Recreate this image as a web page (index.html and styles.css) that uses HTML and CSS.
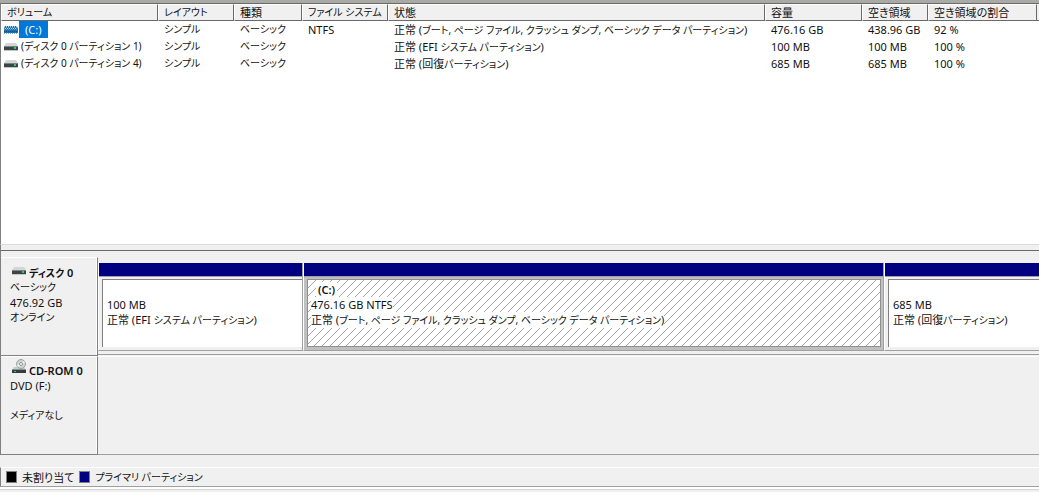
FILE: index.html
```html
<!DOCTYPE html>
<html lang="ja">

<head>
    <meta charset="utf-8">
    <title>ディスクの管理</title>
    <link rel="stylesheet" href="styles.css">
</head>

<body>
    <svg class="defs" width="0" height="0" aria-hidden="true">
        <symbol id="drive" viewBox="0 0 14 8">
            <path d="M2 0h10l2 3H0z" fill="#d4d6d6" />
            <path d="M0 3h14v4H0z" fill="#3c4446" />
            <path d="M0 3h14v1H0z" fill="#7d8486" />
            <path d="M0 7h14v1H0z" fill="#c4c6c6" />
            <path d="M10 4h2v2h-2z" fill="#35c46a" />
        </symbol>
        <symbol id="drive-selected" viewBox="0 0 14 8">
            <path d="M1 0h12l1 3v4H0V3z" fill="#1d6fae" />
            <path d="M2 .5h11M1 2.500h12" stroke="#b9d8ee" stroke-dasharray="1 1" />
            <path d="M0 1.500h14M0 3.500h14" stroke="#5f9fce" stroke-dasharray="1 1" />
            <path d="M0 5.500h14" stroke="#0b4f86" stroke-dasharray="1 1" />
            <path d="M0 7.500h14" stroke="#7fb2d8" stroke-dasharray="1 1" />
        </symbol>
        <symbol id="cdrom" viewBox="0 0 14 15">
            <path d="M2 8h10l2 3H0z" fill="#c6caca" />
            <circle cx="9" cy="5" r="4.500" fill="#d0d5d6" stroke="#9aa3a5" />
            <path d="M9 5l3-3 1 2zM9 5L6 8 5 6z" fill="#f6f8f8" />
            <circle cx="9" cy="5" r="1.500" fill="#fff" stroke="#8c9698" />
            <path d="M0 10h14v1H0z" fill="#8f9698" />
            <path d="M0 11h14v3H0z" fill="#343c3e" />
            <path d="M2 12h2v1H2z" fill="#35c46a" />
        </symbol>
    </svg>

    <div class="volumes">
        <table>
            <colgroup>
                <col class="c-volume">
                <col class="c-layout">
                <col class="c-type">
                <col class="c-fs">
                <col class="c-status">
                <col class="c-size">
                <col class="c-free">
                <col class="c-rate">
                <col class="c-rest">
            </colgroup>
            <thead>
                <tr>
                    <th class="kana">ボリューム</th>
                    <th class="kana">レイアウト</th>
                    <th>種類</th>
                    <th class="kana">ファイル システム</th>
                    <th>状態</th>
                    <th>容量</th>
                    <th>空き領域</th>
                    <th>空き領域の割合</th>
                    <td></td>
                </tr>
            </thead>
            <tbody>
                <tr>
                    <td class="name"><svg class="icon"><use href="#drive-selected" /></svg><span class="on">(C:)</span></td>
                    <td class="kana">シンプル</td>
                    <td class="kana">ベーシック</td>
                    <td>NTFS</td>
                    <td>正常 (<span class="kana">ブート, ページ ファイル, クラッシュ ダンプ, ベーシック データ パーティション</span>)</td>
                    <td>476.16 GB</td>
                    <td>438.96 GB</td>
                    <td>92 %</td>
                    <td></td>
                </tr>
                <tr>
                    <td class="name kana"><svg class="icon"><use href="#drive" /></svg><span>(ディスク 0 パーティション 1)</span></td>
                    <td class="kana">シンプル</td>
                    <td class="kana">ベーシック</td>
                    <td></td>
                    <td>正常 (EFI <span class="kana">システム パーティション</span>)</td>
                    <td>100 MB</td>
                    <td>100 MB</td>
                    <td>100 %</td>
                    <td></td>
                </tr>
                <tr>
                    <td class="name kana"><svg class="icon"><use href="#drive" /></svg><span>(ディスク 0 パーティション 4)</span></td>
                    <td class="kana">シンプル</td>
                    <td class="kana">ベーシック</td>
                    <td></td>
                    <td>正常 (回復<span class="kana">パーティション</span>)</td>
                    <td>685 MB</td>
                    <td>685 MB</td>
                    <td>100 %</td>
                    <td></td>
                </tr>
            </tbody>
        </table>
    </div>

    <div class="splitter"></div>

    <div class="disks">
        <div class="disk">
            <div class="label">
                <h2><svg class="icon"><use href="#drive" /></svg><span><span class="kana">ディスク</span> 0</span></h2>
                <p class="kana">ベーシック</p>
                <p>476.92 GB</p>
                <p class="kana">オンライン</p>
            </div>
            <div class="parts">
                <div class="part">
                    <div class="bar"></div>
                    <div class="box">
                        <p></p>
                        <p>100 MB</p>
                        <p>正常 (EFI <span class="kana">システム パーティション</span>)</p>
                    </div>
                </div>
                <div class="part selected">
                    <div class="bar"></div>
                    <div class="box">
                        <p><b>(C:)</b></p>
                        <p><span class="plain">476.16 GB NTFS</span></p>
                        <p><span class="plain">正常 (<span class="kana">ブート, ページ ファイル, クラッシュ ダンプ, ベーシック データ パーティション</span>)</span></p>
                    </div>
                </div>
                <div class="part last">
                    <div class="bar"></div>
                    <div class="box">
                        <p></p>
                        <p>685 MB</p>
                        <p>正常 (回復<span class="kana">パーティション</span>)</p>
                    </div>
                </div>
            </div>
        </div>
        <div class="disk">
            <div class="label cd">
                <h2><svg class="icon"><use href="#cdrom" /></svg><span>CD-ROM 0</span></h2>
                <p>DVD (F:)</p>
                <p></p>
                <p class="kana">メディアなし</p>
            </div>
            <div class="empty"></div>
        </div>
    </div>

    <ul class="legend">
        <li><i class="black"></i>未割り当て</li>
        <li class="kana"><i class="navy"></i>プライマリ パーティション</li>
    </ul>
    <div class="status"></div>
</body>

</html>
```
FILE: styles.css
```css
* {
    margin: 0;
    padding: 0;
    box-sizing: border-box;
}

body {
    display: flex;
    flex-direction: column;
    min-height: 100vh;
    background: #f0f0f0;
    color: #111;
    font: 11px/15px "Noto Sans", "Noto Sans CJK JP", sans-serif;
    font-feature-settings: "palt";
    border-top: 3px solid #a9a9a5;
}

.kana {
    font-size: 10px;
}

.defs {
    position: absolute;
}

.icon {
    width: 14px;
    height: 8px;
    flex: none;
}

/* volume list */
.volumes {
    flex: 1;
    background: #fff;
    border-top: 1px solid #696969;
    border-left: 1px solid #808080;
}

table {
    width: 100%;
    table-layout: fixed;
    border-collapse: separate;
    border-spacing: 0;
}

.c-volume {
    width: 157px;
}

.c-layout {
    width: 76px;
}

.c-type {
    width: 68px;
}

.c-fs {
    width: 86px;
}

.c-size {
    width: 97px;
}

.c-free {
    width: 66px;
}

.c-rate {
    width: 109px;
}

.c-rest {
    width: 2px;
}

th,
td {
    height: 17px;
    padding-left: 6px;
    text-align: left;
    font-weight: normal;
    white-space: nowrap;
}

thead th,
thead td {
    background: #f0f0f0;
    border-top: 1px solid #fff;
    border-bottom: 1px solid #696969;
}

thead th {
    border-left: 1px solid #fff;
    border-right: 1px solid #696969;
    padding-left: 5px;
}

thead td,
tbody td:last-child {
    padding: 0;
}

.name {
    display: flex;
    align-items: center;
    padding-left: 3px;
}

.name span {
    padding: 0 3px;
    line-height: 17px;
}

.name .on {
    margin-left: 1px;
    padding: 0 6px;
    background: #0078d7;
    color: #fff;
}

.splitter {
    height: 7px;
    background: #f0f0f0;
    border-top: 1px solid #dcdcdc;
    border-bottom: 1px solid #696969;
    border-left: 1px solid #808080;
}

/* disks */
.disks {
    padding-top: 6px;
    border-left: 1px solid #808080;
}

.disk {
    display: flex;
    height: 99px;
}

.label {
    width: 97px;
    flex: none;
    padding: 7px 0 0 9px;
    border-top: 1px solid #fff;
    border-right: 1px solid #808080;
    border-bottom: 1px solid #808080;
    box-shadow: inset -1px 0 #fff;
}

.label h2 {
    display: flex;
    gap: 3px;
    height: 15px;
    padding-left: 2px;
    font-size: 11px;
    font-weight: 600;
}

.label h2 .icon {
    margin-top: 2px;
}

.label p {
    height: 15px;
}

.label.cd {
    padding-top: 6px;
}

.cd h2 {
    align-items: flex-end;
}

.cd h2 .icon {
    height: 15px;
    margin: 0 0 4px;
}

.parts {
    flex: 1;
    min-width: 0;
    display: grid;
    grid-template-columns: 205fr 581fr 155fr;
    padding-top: 6px;
    border-bottom: 1px solid #a0a0a0;
    margin-bottom: 1px;
}

.part {
    display: flex;
    flex-direction: column;
    min-width: 0;
    margin-bottom: 3px;
    border-left: 1px solid #fff;
    border-right: 1px solid #a0a0a0;
    border-bottom: 1px solid #a0a0a0;
}

.bar {
    height: 14px;
    background: #000080;
    border-bottom: 1px solid #a0a0a0;
}

.box {
    flex: 1;
    margin: 2px 0 3px 3px;
    padding: 2px 0 0 4px;
    background: #fff;
    border-top: 1px solid #808080;
    border-left: 1px solid #808080;
    white-space: nowrap;
    overflow: hidden;
}

.box p {
    height: 15px;
}

.last {
    border-right: 0;
}

.selected {
    background: #c0c0c0;
}

.selected .box {
    margin-right: 2px;
    padding-left: 3px;
    border: 1px solid #909090;
    background: #fff linear-gradient(135deg, transparent 46%, #a8a8a8 48%, #a8a8a8 52%, transparent 54%) 0 0 / 8px 8px;
}

.selected .plain,
.selected b {
    display: inline-block;
    background: #fff;
}

.selected b {
    margin-left: 5px;
    padding: 0 2px;
    font-weight: 600;
}

.empty {
    flex: 1;
    border-top: 1px solid #fff;
    border-bottom: 1px solid #a0a0a0;
}

/* legend */
.legend {
    display: flex;
    gap: 5px;
    height: 20px;
    margin-top: 12px;
    padding-left: 5px;
    border-top: 1px solid #fff;
    border-left: 1px solid #808080;
    border-bottom: 1px solid #a0a0a0;
    list-style: none;
}

.legend li {
    display: flex;
    align-items: center;
}

.legend i {
    width: 11px;
    height: 12px;
    margin-right: 5px;
    border: 1px solid #808080;
}

.legend .black {
    background: #000;
}

.legend .navy {
    background: #000080;
}

.status {
    height: 5px;
    border-top: 2px solid #fff;
    box-shadow: inset 0 1px #d4d4d4;
}
```
